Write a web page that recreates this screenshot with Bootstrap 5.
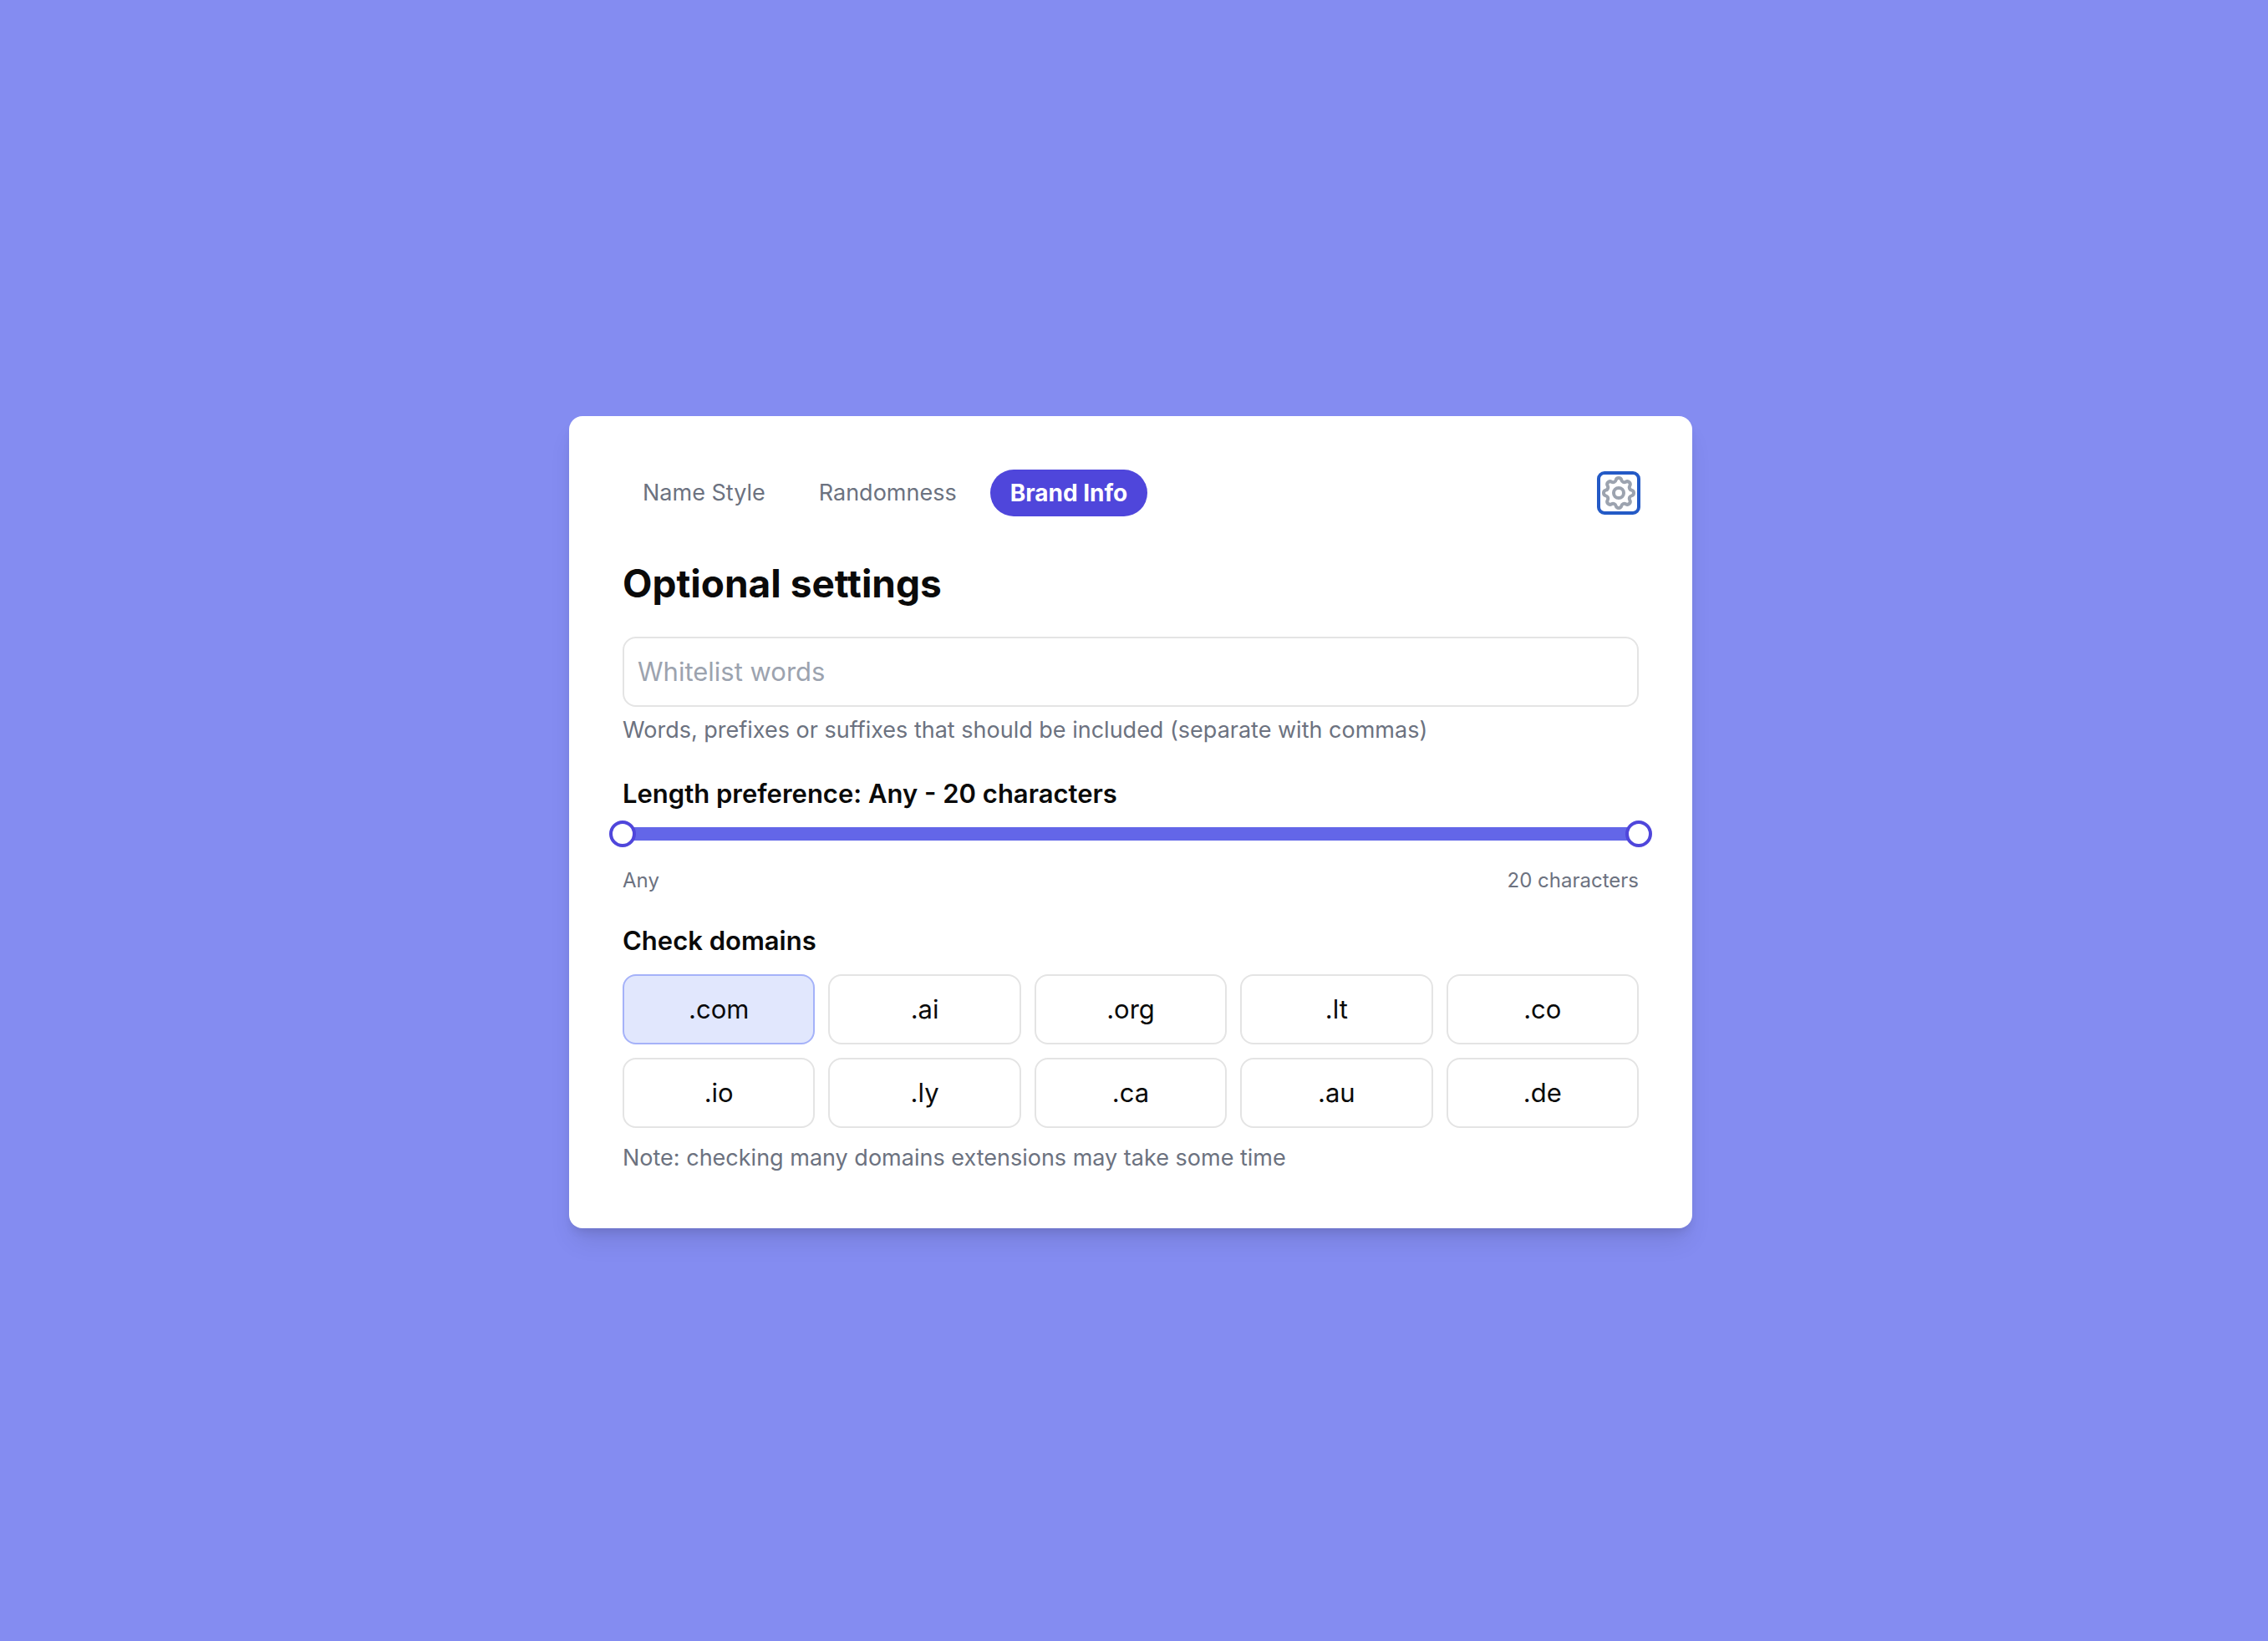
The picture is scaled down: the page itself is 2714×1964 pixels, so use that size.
<!DOCTYPE html>
<html lang="en">
<head>
<meta charset="utf-8">
<meta name="viewport" content="width=device-width, initial-scale=1">
<title>Brand name generator</title>
<link href="https://cdn.jsdelivr.net/npm/bootstrap@5.3.0/dist/css/bootstrap.min.css" rel="stylesheet">
<style>
  :root {
    --indigo-ring: #a5b2f9;
    --indigo-tint: #e1e7fd;
    --indigo-track: #6366e8;
    --indigo-strong: #4f46db;
    --ink: #0a0a0a;
    --muted: #6c7280;
    --faint: #9ca3af;
    --line: #e4e4e4;
  }
  body {
    background: #848cf1;
    color: var(--ink);
    font-family: Inter, "Liberation Sans", sans-serif;
    font-size: 31px;
    line-height: 48px;
  }
  .page-wrap { padding: 24px 24px 20px 16px; }
  .settings-card {
    --bs-card-border-radius: 16px;
    --bs-card-border-width: 0;
    --bs-card-color: var(--ink);
    max-width: 1344px;
    padding: 64px;
    box-shadow: 0 20px 30px -6px rgba(0, 0, 0, .1), 0 8px 12px -4px rgba(0, 0, 0, .1);
  }
  .step-nav {
    --bs-nav-pills-border-radius: 28px;
    --bs-nav-pills-link-active-bg: var(--indigo-strong);
    --bs-nav-link-color: var(--muted);
    --bs-nav-link-hover-color: var(--ink);
    gap: 16px;
  }
  .step-nav .nav-link { padding: 8px 24px; font-size: 27px; line-height: 40px; }
  .step-nav .nav-link.active { font-size: 28px; font-weight: 700; }
  .gear-btn {
    --bs-btn-padding-x: 0;
    --bs-btn-padding-y: 0;
    --bs-btn-border-width: 0;
    --bs-btn-border-radius: 7px;
    --bs-btn-color: var(--faint);
    --bs-btn-hover-color: var(--muted);
    line-height: 0;
    outline: 4px solid #245ac6;
    outline-offset: -2px;
  }
  .settings-title { font-size: 46px; line-height: 64px; font-weight: 700; margin: 48px 0 32px; }
  .word-input {
    padding: 16px;
    border: 2px solid var(--line);
    border-radius: 16px;
    font-size: 31px;
    line-height: 48px;
    color: var(--ink);
  }
  .word-input::placeholder { color: var(--faint); }
  .hint-text { font-size: 27px; line-height: 40px; color: var(--muted); }
  .group-title { font-size: 31px; line-height: 48px; font-weight: 600; margin: 32px 0 0; }

  /* Two range inputs share one rail, each thumb centred on an end of it */
  .dual-range { height: 32px; }
  .rail-fill { height: 16px; background: var(--indigo-track); }
  .dual-range input {
    position: absolute;
    top: 0;
    left: -16px;
    width: calc(100% + 32px);
    height: 32px;
    margin: 0;
    background: none;
    appearance: none;
    -webkit-appearance: none;
    pointer-events: none;
  }
  .dual-range input::-webkit-slider-thumb {
    -webkit-appearance: none;
    width: 32px;
    height: 32px;
    border: 4px solid var(--indigo-strong);
    border-radius: 50%;
    background: #fff;
    pointer-events: auto;
  }
  .dual-range input::-moz-range-thumb {
    box-sizing: border-box;
    width: 32px;
    height: 32px;
    border: 4px solid var(--indigo-strong);
    border-radius: 50%;
    background: #fff;
    pointer-events: auto;
  }
  .range-ends { font-size: 24px; line-height: 32px; color: var(--muted); margin-top: 24px; }

  .domain-grid { --bs-gutter-x: 16px; --bs-gutter-y: 16px; }
  .domain-btn {
    --bs-btn-padding-x: 16px;
    --bs-btn-padding-y: 16px;
    --bs-btn-font-size: 31px;
    --bs-btn-line-height: 48px;
    --bs-btn-border-width: 2px;
    --bs-btn-border-radius: 16px;
    --bs-btn-color: var(--ink);
    --bs-btn-border-color: var(--line);
    --bs-btn-hover-color: var(--ink);
    --bs-btn-hover-border-color: var(--indigo-ring);
    --bs-btn-active-color: var(--ink);
    --bs-btn-active-bg: var(--indigo-tint);
    --bs-btn-active-border-color: var(--indigo-ring);
  }
</style>
<script src="https://cdn.jsdelivr.net/npm/bootstrap@5.3.0/dist/js/bootstrap.bundle.min.js"></script>
</head>
<body>
<main class="page-wrap min-vh-100 d-flex align-items-center justify-content-center">
  <form class="card settings-card w-100">
    <div class="d-flex align-items-center justify-content-between">
      <ul class="nav nav-pills step-nav">
        <li class="nav-item"><button type="button" class="nav-link">Name Style</button></li>
        <li class="nav-item"><button type="button" class="nav-link">Randomness</button></li>
        <li class="nav-item"><button type="button" class="nav-link active" aria-current="page">Brand Info</button></li>
      </ul>
      <button type="button" class="btn gear-btn" aria-label="Settings">
        <svg width="48" height="48" viewBox="0 0 24 24" fill="none" stroke="currentColor" stroke-width="2" stroke-linecap="round" stroke-linejoin="round" aria-hidden="true">
          <path d="M10.325 4.317c.426-1.756 2.924-1.756 3.35 0a1.724 1.724 0 002.573 1.066c1.543-.94 3.31.826 2.37 2.37a1.724 1.724 0 001.065 2.572c1.756.426 1.756 2.924 0 3.35a1.724 1.724 0 00-1.066 2.573c.94 1.543-.826 3.31-2.37 2.37a1.724 1.724 0 00-2.572 1.065c-.426 1.756-2.924 1.756-3.35 0a1.724 1.724 0 00-2.573-1.066c-1.543.94-3.31-.826-2.37-2.37a1.724 1.724 0 00-1.065-2.572c-1.756-.426-1.756-2.924 0-3.35a1.724 1.724 0 001.066-2.573c-.94-1.543.826-3.31 2.37-2.37.996.608 2.296.07 2.572-1.065z"/>
          <circle cx="12" cy="12" r="3"/>
        </svg>
      </button>
    </div>

    <h1 class="settings-title">Optional settings</h1>

    <input type="text" class="form-control word-input" id="whitelist" placeholder="Whitelist words" aria-describedby="whitelistHint">
    <label class="hint-text mt-2" id="whitelistHint" for="whitelist">Words, prefixes or suffixes that should be included (separate with commas)</label>

    <h2 class="group-title mb-2">Length preference: Any - 20 characters</h2>
    <div class="dual-range position-relative d-flex align-items-center">
      <div class="rail-fill w-100"></div>
      <input type="range" id="minLength" min="0" max="20" value="0" aria-label="Minimum length">
      <input type="range" id="maxLength" min="0" max="20" value="20" aria-label="Maximum length">
    </div>
    <div class="range-ends d-flex justify-content-between">
      <label for="minLength">Any</label>
      <label for="maxLength">20 characters</label>
    </div>

    <h2 class="group-title mb-3">Check domains</h2>
    <div class="row row-cols-5 domain-grid">
      <div class="col"><input type="checkbox" class="btn-check" id="tld-com" checked><label class="btn domain-btn w-100" for="tld-com">.com</label></div>
      <div class="col"><input type="checkbox" class="btn-check" id="tld-ai"><label class="btn domain-btn w-100" for="tld-ai">.ai</label></div>
      <div class="col"><input type="checkbox" class="btn-check" id="tld-org"><label class="btn domain-btn w-100" for="tld-org">.org</label></div>
      <div class="col"><input type="checkbox" class="btn-check" id="tld-lt"><label class="btn domain-btn w-100" for="tld-lt">.lt</label></div>
      <div class="col"><input type="checkbox" class="btn-check" id="tld-co"><label class="btn domain-btn w-100" for="tld-co">.co</label></div>
      <div class="col"><input type="checkbox" class="btn-check" id="tld-io"><label class="btn domain-btn w-100" for="tld-io">.io</label></div>
      <div class="col"><input type="checkbox" class="btn-check" id="tld-ly"><label class="btn domain-btn w-100" for="tld-ly">.ly</label></div>
      <div class="col"><input type="checkbox" class="btn-check" id="tld-ca"><label class="btn domain-btn w-100" for="tld-ca">.ca</label></div>
      <div class="col"><input type="checkbox" class="btn-check" id="tld-au"><label class="btn domain-btn w-100" for="tld-au">.au</label></div>
      <div class="col"><input type="checkbox" class="btn-check" id="tld-de"><label class="btn domain-btn w-100" for="tld-de">.de</label></div>
    </div>
    <p class="hint-text mt-3 mb-0">Note: checking many domains extensions may take some time</p>
  </form>
</main>
</body>
</html>
